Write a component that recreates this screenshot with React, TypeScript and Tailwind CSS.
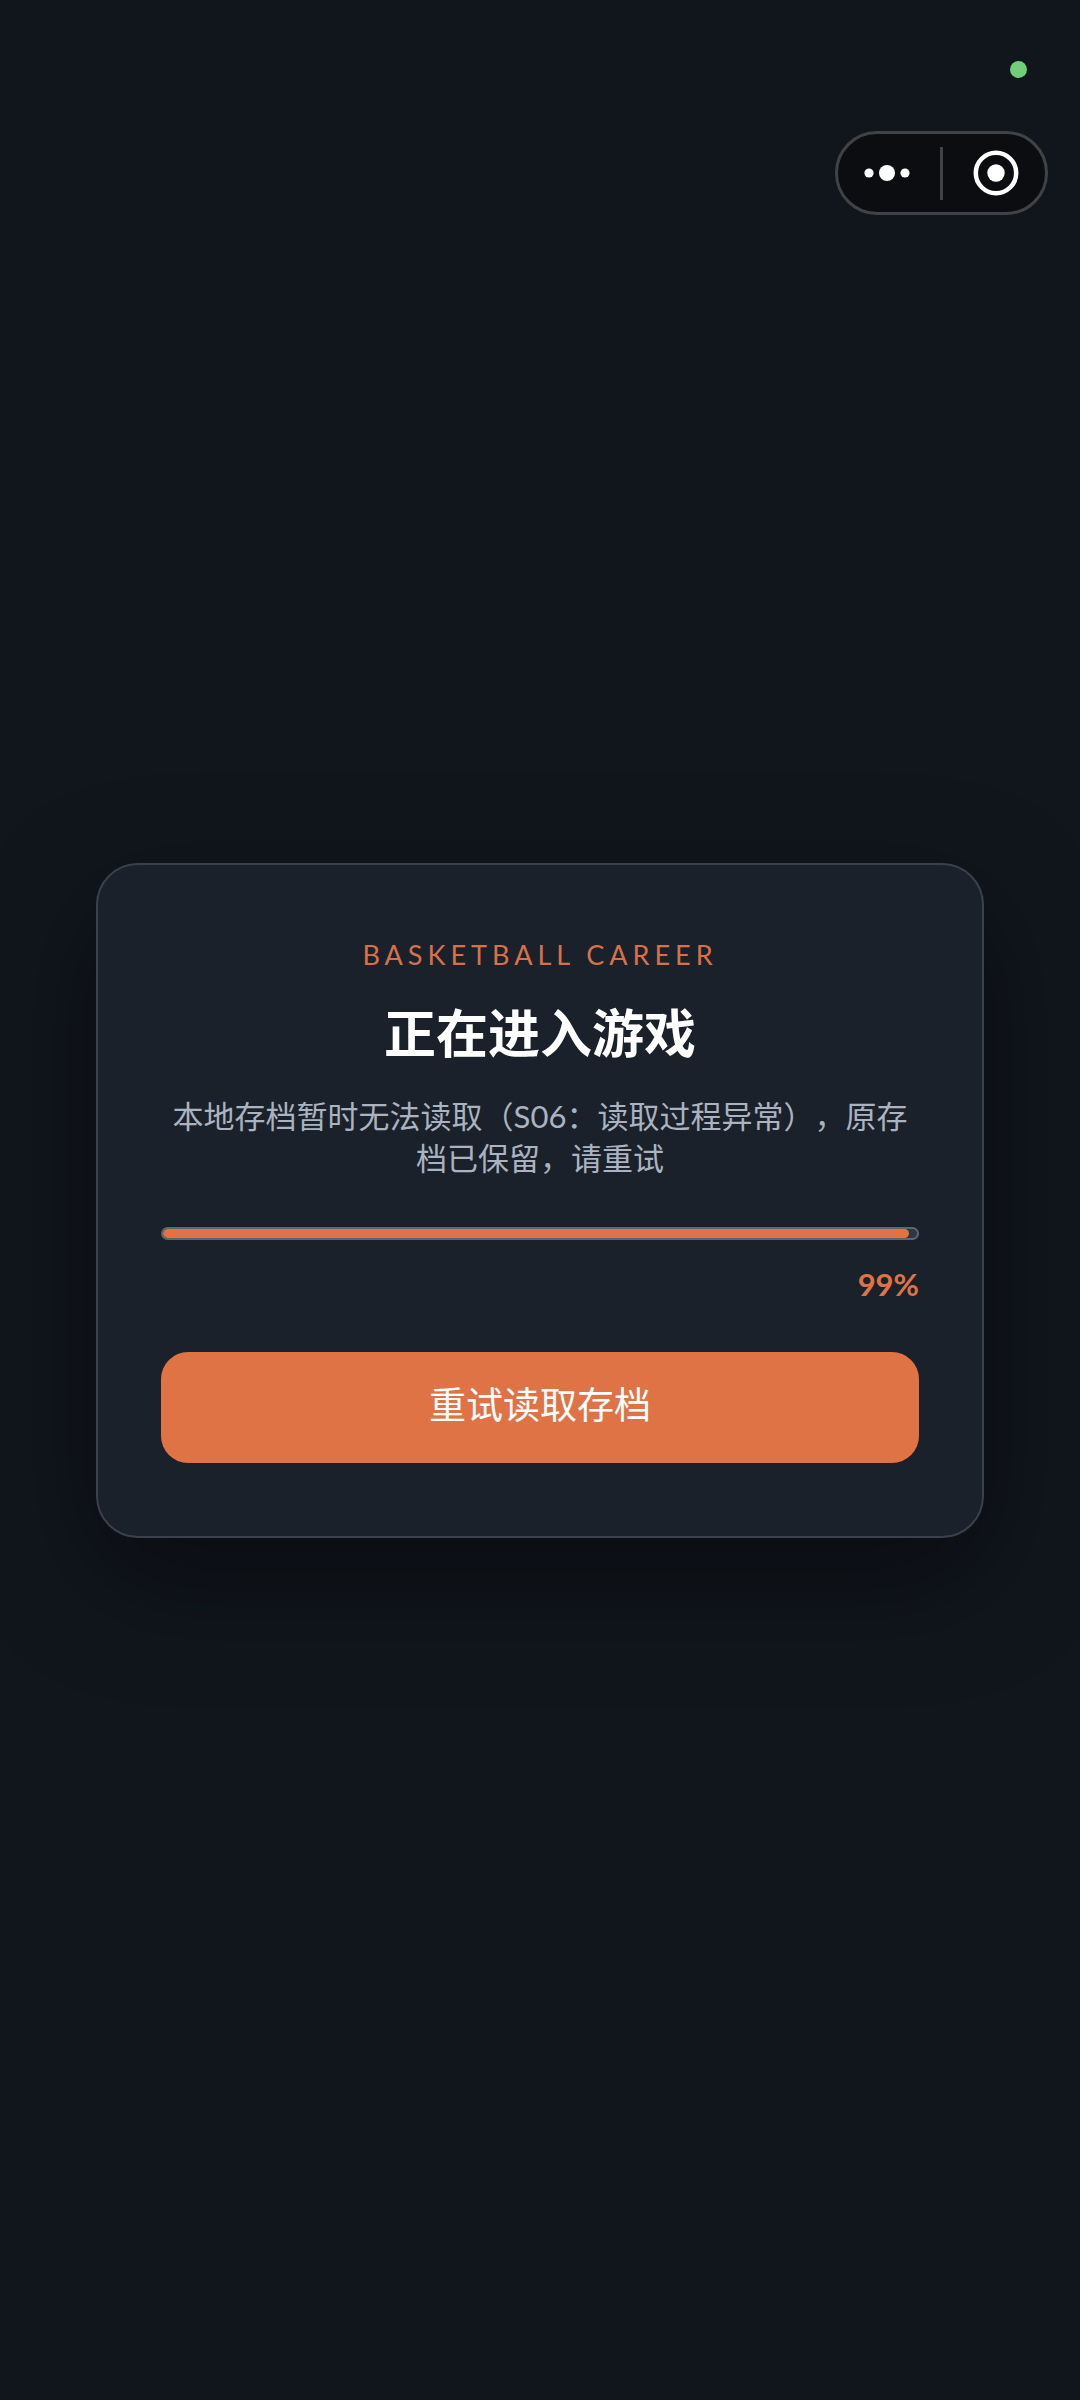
import React, { useState } from "react";

const START_PROGRESS = 99;

export default function LoadingPage() {
  const [progress, setProgress] = useState(START_PROGRESS);

  return (
    <div className="min-h-screen grid grid-rows-[1fr_auto_1fr] bg-[#11161d] font-['Lato','Noto_Sans_CJK_SC',sans-serif]">
      <header className="flex flex-col items-end px-8 pt-[61px]">
        {/* Status dot */}
        <div className="w-[17px] h-[17px] mr-[21px] rounded-full bg-[#70d07a]" />
        <Capsule />
      </header>

      <main className="px-24">
        <section className="rounded-[42px] border-2 border-[#3a414e] bg-[#1b212a] px-[63px] pt-[70px] pb-[73px] text-center shadow-[0_40px_120px_rgba(0,0,0,0.45)]">
          <p className="text-[27px] leading-[40px] tracking-[5px] text-[#d87149]">BASKETBALL CAREER</p>
          <h1 className="mt-6 text-[52px] leading-[68px] font-bold text-white">正在进入游戏</h1>
          <p className="mt-7 text-[31px] leading-[42px] text-[#abb3c0] [text-spacing-trim:space-all]">
            本地存档暂时无法读取（S06：读取过程异常），原存档已保留，请重试
          </p>

          {/* Progress */}
          <div
            role="progressbar"
            aria-label="读取进度"
            aria-valuenow={progress}
            aria-valuemin={0}
            aria-valuemax={100}
            className="mt-12 h-[13px] rounded-full border-2 border-[#5f646f] bg-[#2c3646] overflow-hidden"
          >
            <div className="h-full rounded-full bg-[#df7346]" style={{ width: `${progress}%` }} />
          </div>
          <p className="mt-6 text-[31px] leading-[40px] font-bold text-right text-[#df7346]">{progress}%</p>

          <button
            type="button"
            onClick={() => setProgress(START_PROGRESS)}
            className="mt-12 block w-full h-[111px] rounded-[27px] bg-[#df7346] pb-1 text-[37px] leading-[48px] text-white"
          >
            重试读取存档
          </button>
        </section>
      </main>
    </div>
  );
}

function Capsule() {
  return (
    <div className="mt-[53px] flex items-center w-[213px] h-[84px] rounded-full border-[3px] border-[#404346] bg-[#0b0d10]">
      <button type="button" aria-label="更多" className="flex-1 h-full flex items-center justify-center pr-1">
        <svg width="46" height="18" viewBox="0 0 46 18" fill="#fff">
          <circle cx="5" cy="9" r="4.6" />
          <circle cx="23" cy="9" r="8" />
          <circle cx="41" cy="9" r="4.6" />
        </svg>
      </button>
      <span className="w-[3px] h-[53px] bg-[#404346]" />
      <button type="button" aria-label="关闭" className="flex-1 h-full flex items-center justify-center pl-1">
        <svg width="46" height="46" viewBox="0 0 46 46" fill="none">
          <circle cx="23" cy="23" r="20.2" stroke="#fff" strokeWidth="4.5" />
          <circle cx="23" cy="23" r="8.7" fill="#fff" />
        </svg>
      </button>
    </div>
  );
}
